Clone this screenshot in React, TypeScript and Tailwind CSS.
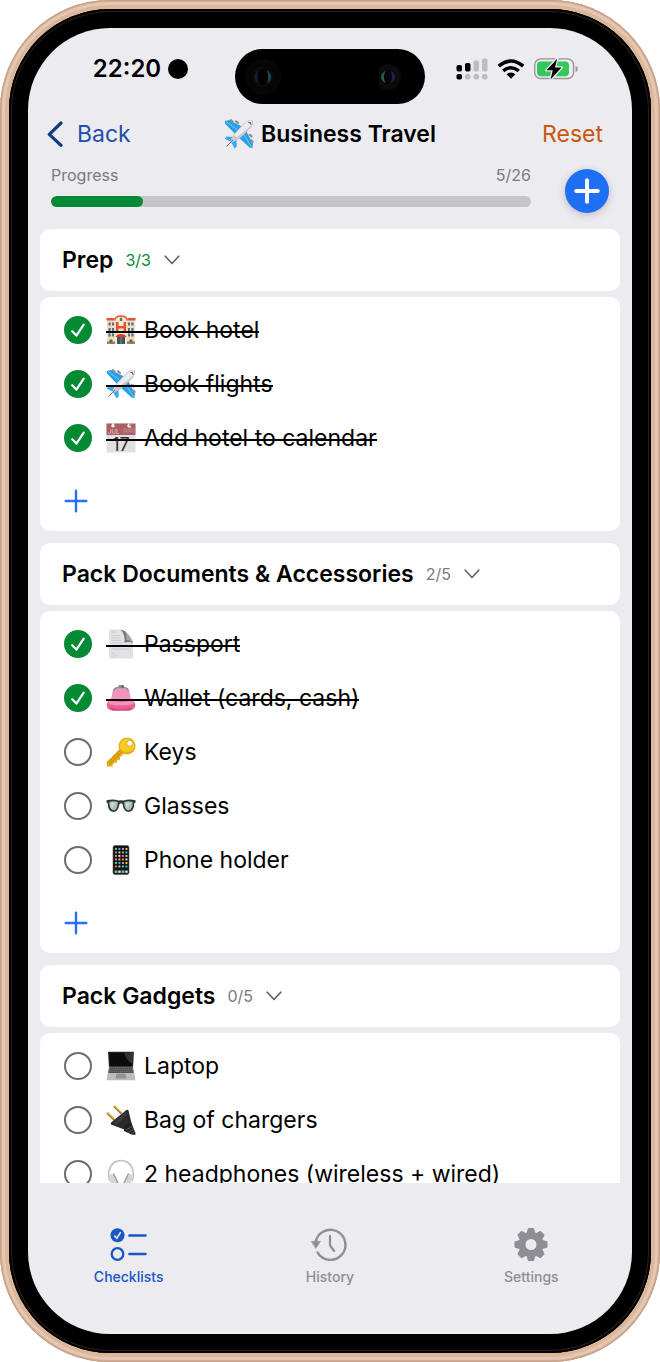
import { useState, type ReactNode } from "react"

type EmojiName =
  | "hotel"
  | "plane"
  | "calendar"
  | "page"
  | "purse"
  | "key"
  | "glasses"
  | "phone"
  | "laptop"
  | "plug"
  | "headphones"

interface Item {
  id: string
  emoji: EmojiName
  label: string
  done?: boolean
}

interface Section {
  title: string
  count: string
  complete?: boolean
  items: Item[]
}

const sections: Section[] = [
  {
    title: "Prep",
    count: "3/3",
    complete: true,
    items: [
      { id: "hotel", emoji: "hotel", label: "Book hotel", done: true },
      { id: "flights", emoji: "plane", label: "Book flights", done: true },
      { id: "calendar", emoji: "calendar", label: "Add hotel to calendar", done: true },
    ],
  },
  {
    title: "Pack Documents & Accessories",
    count: "2/5",
    items: [
      { id: "passport", emoji: "page", label: "Passport", done: true },
      { id: "wallet", emoji: "purse", label: "Wallet (cards, cash)", done: true },
      { id: "keys", emoji: "key", label: "Keys" },
      { id: "glasses", emoji: "glasses", label: "Glasses" },
      { id: "phone-holder", emoji: "phone", label: "Phone holder" },
    ],
  },
  {
    title: "Pack Gadgets",
    count: "0/5",
    items: [
      { id: "laptop", emoji: "laptop", label: "Laptop" },
      { id: "chargers", emoji: "plug", label: "Bag of chargers" },
      { id: "headphones", emoji: "headphones", label: "2 headphones (wireless + wired)" },
    ],
  },
]

const phoneDots = ["#4ade80", "#f4f4f5", "#e879f9", "#d4d4d8", "#fb923c", "#38bdf8", "#f87171", "#facc15"]

const emojiArt: Record<EmojiName, ReactNode> = {
  hotel: (
    <>
      <rect x="1" y="3.5" width="28" height="25" fill="#f3dcc0" />
      <path d="M9 28V5Q9 1 15 1Q21 1 21 5V28Z" fill="#fbe9d3" />
      <path d="M0.5 3H8.5V5.5H0.5ZM21.5 3H29.5V5.5H21.5Z" fill="#e2552c" />
      <path d="M9 5.5Q9 1 15 1Q21 1 21 5.5" fill="none" stroke="#e2552c" strokeWidth="1.3" />
      <path d="M11.2 7V18M18.8 7V18M11.2 12.2H18.8" stroke="#e4532b" strokeWidth="2.6" />
      <path
        d="M2.5 7.5H4.7V10.5H2.5ZM6 7.5H8V10.5H6ZM2.5 13H4.7V16H2.5ZM6 13H8V16H6ZM2.5 18.5H4.7V21.5H2.5ZM6 18.5H8V21.5H6ZM22 7.5H24V10.5H22ZM25.3 7.5H27.5V10.5H25.3ZM22 13H24V16H22ZM25.3 13H27.5V16H25.3ZM22 18.5H24V21.5H22ZM25.3 18.5H27.5V21.5H25.3ZM13.8 2.7H16.2V6H13.8Z"
        fill="#4c7185"
      />
      <rect x="11" y="22" width="8" height="7" fill="#38596a" />
      <path d="M15 22V29" stroke="#b9876a" strokeWidth="0.8" />
      <path d="M9.5 22Q10.5 19 15 19Q19.5 19 20.5 22Z" fill="#db3a24" />
      <path d="M1 29V26.5H9V29ZM21 29V26.5H29V29Z" fill="#a77b5e" />
      <circle cx="5" cy="26" r="1.7" fill="#46783a" />
      <circle cx="25" cy="26" r="1.7" fill="#46783a" />
    </>
  ),
  plane: (
    <>
      <path d="M20 8.5L5 1L0.8 2L1.2 4.8L12 16Z" fill="#2b9fe4" />
      <path d="M21.5 10.5L29 25L28.4 29.3L25.6 28.4L14 18Z" fill="#2b9fe4" />
      <path d="M10 18L2.5 17.4L0.6 19.6L8 23.4Z" fill="#3aaaf0" />
      <path d="M12.5 20.5L12.8 27.4L10.6 29.6L6.8 22.8Z" fill="#3aaaf0" />
      <path d="M1.8 2.3L13 10.5M28 28.5L20 16" stroke="#8bd2f6" strokeWidth="0.8" />
      <path d="M6.8 1.2L8.6 2.6M12 2.3L14 4M28.6 22.8L27.4 21.4M27.6 17.5L26 15.8" stroke="#8f8f94" strokeWidth="2.2" strokeLinecap="round" />
      <path d="M28.9 1.1C25.8 0.4 22.8 1.4 20.5 3.7L9.7 15.2L5.2 24.8L14.8 20.3L26.3 9.5C28.6 7.2 29.6 4.2 28.9 1.1Z" fill="#c9c9cd" />
      <path d="M28 1.6C25.4 1.3 23.3 2.2 21.5 4L9.8 16.6L13.2 18L26.6 7Z" fill="#ededf0" />
      <path d="M24.3 3.2Q26.8 3.1 26.8 5.6" fill="none" stroke="#55585f" strokeWidth="1.1" />
      <path d="M9 21L2.5 27.5" stroke="#72747b" strokeWidth="1" />
    </>
  ),
  calendar: (
    <>
      <rect x="0.5" y="0.5" width="29" height="29" fill="#e0e0e1" />
      <rect x="0.5" y="0.5" width="29" height="11.5" fill="#ad6064" />
      <path d="M17 5.2H29V9.5H17Z" fill="#b6757a" />
      <circle cx="7" cy="2.8" r="1.7" fill="#fff" />
      <circle cx="23" cy="2.8" r="1.7" fill="#fff" />
      <path d="M7 0V3M23 0V3L25 4.5" stroke="#f3eaea" strokeWidth="1.3" />
      <text x="2" y="10.5" fontSize="6" fontFamily="Inter, sans-serif" fill="#e8cdcf">JUL</text>
      <text x="15" y="27.5" fontSize="18" textAnchor="middle" fontFamily="Inter, sans-serif" fill="#303032">17</text>
    </>
  ),
  page: (
    <>
      <path d="M3 0.5H15Q19 1.5 19.5 8L20 13Q24 12 27 15V29.5H3Z" fill="#e2e2e4" />
      <path d="M14.5 0.5Q20 1.5 21.5 5.5L27 14.5Q22.5 12 18.5 13.8Q19.5 5 14.5 0.5Z" fill="#747479" />
      <path d="M16 0.5Q21 2 20.5 11Q24.5 11 27 14.5V13Q24 5 16 0.5Z" fill="#a5a5aa" />
      <path d="M5.5 3H11M5.5 6.5H14M5.5 9H14M5.5 11.5H15M5.5 14H16M5.5 17H23M5.5 20H23M5.5 24.5H9M5.5 27H12" stroke="#cacacf" strokeWidth="0.9" />
    </>
  ),
  purse: (
    <>
      <path d="M7.5 11Q7 4.5 12.5 4.5H17.5Q23 4.5 22.5 11" fill="#d9a6b9" stroke="#8f8f93" strokeWidth="1.7" />
      <circle cx="13.8" cy="3.3" r="1.6" fill="#929296" />
      <circle cx="16.4" cy="3.3" r="1.6" fill="#68686c" />
      <path d="M7 8Q15 5.5 23 8L25.5 18H4.5Z" fill="#f294bd" />
      <path d="M5.5 16Q15 18 24.5 16Q29.5 18.5 29.3 22.5Q28.5 27.5 22 27.5H8Q1.5 27.5 0.7 22.5Q0.5 18.5 5.5 16Z" fill="#e85f99" />
      <path d="M4.5 17.5Q15 20 25.5 17.5Q27.8 19 27.8 21Q15 24 2.2 21Q2.2 19 4.5 17.5Z" fill="#f590ba" />
      <path d="M3 24.5Q15 28 27 24.5L24 27.5H6Z" fill="#d54683" />
    </>
  ),
  key: (
    <>
      <path
        d="M13.2 12.5C11.3 6.1 15.4 0.6 21 0.6C26 0.6 29.5 4.4 29.5 9C29.5 14.8 24.1 18.7 17.4 16.9L14 20.2L14 22.7L11.3 22.9L11 25.6L8.5 25.7L6.5 27.5V29.5H0.8V25Z"
        fill="#e4ad12"
      />
      <path d="M14.2 12C12.7 6.8 16 2 21 1.8C25.3 1.7 28.3 4.8 28.3 8.6C28.2 13.4 23 16.2 17.2 14.6Z" fill="#f5cb25" />
      <path d="M1.8 26L14 13.5M2.8 28L15.5 15.3" stroke="#b57f08" strokeWidth="0.8" />
      <circle cx="23.7" cy="6.3" r="2.9" fill="#fff" stroke="#d59b10" strokeWidth="0.7" />
    </>
  ),
  glasses: (
    <>
      <path d="M0.5 9.3Q7 7.8 12.5 9.5Q15 8.9 17.5 9.5Q23 7.8 29.5 9.3V11.5L28.3 12.3Q28.3 20.5 22.5 21Q17.7 21 16.5 13Q15 11.5 13.5 13Q12.3 21 7.5 21Q1.7 20.5 1.7 12.3L0.5 11.5Z" fill="#323638" />
      <path d="M3.3 11Q7.5 9.7 11.8 11.1Q11.8 19 7.8 19.5Q3.3 19 3.3 11ZM18.2 11.1Q22.5 9.7 26.7 11Q26.7 19 22.2 19.5Q18.2 19 18.2 11.1Z" fill="#a3c1b7" />
      <path d="M4.5 12Q7.5 11 9.8 12L6 18Q4.4 15.5 4.5 12ZM19.4 12Q22 11 24.5 12L20.8 18Q19.5 15.5 19.4 12Z" fill="#c4d8cf" />
    </>
  ),
  phone: (
    <>
      <rect x="7" y="0.5" width="16" height="29" rx="2" fill="#151516" stroke="#525256" strokeWidth="0.6" />
      {Array.from({ length: 24 }, (_, i) => (
        <rect
          key={i}
          x={9 + (i % 4) * 3.5}
          y={3 + Math.floor(i / 4) * 3.5}
          width="1.9"
          height="1.9"
          fill={phoneDots[(i * 5 + Math.floor(i / 4) * 2) % 8]}
        />
      ))}
      <rect x="8.2" y="25.2" width="13.6" height="3" fill="#505153" />
      <path d="M9 26.7H11M16 26.7H18" stroke="#4ade80" strokeWidth="2" />
      <path d="M12.5 26.7H14.5M19.5 26.7H21.5" stroke="#dbeafe" strokeWidth="2" />
    </>
  ),
  laptop: (
    <>
      <path d="M2 0.8H28L27 17H3Z" fill="#39393b" />
      <path d="M2.8 1.4H27.2L26.3 15H3.7Z" fill="#0b0b0c" />
      <path d="M18 1.4H27.2L26.3 13Q20 9 18 1.4Z" fill="#323235" />
      <path d="M3 16H27L28.3 22.5H1.7Z" fill="#77777a" />
      <path d="M4 17.2H26M3.5 19.2H26.5M3.2 21.2H26.8" stroke="#3b3b3e" strokeWidth="1.2" strokeDasharray="1.5 0.4" />
      <path d="M1.7 22.5H28.3L29.5 29.3H0.5Z" fill="#bcbcbe" />
      <path d="M10.5 22.8H19.5L20.5 27.5H9.5Z" fill="#929295" />
    </>
  ),
  plug: (
    <>
      <path d="M1.2 8L9 15.5M8 1.2L15.5 8.5" stroke="#97701f" strokeWidth="2.3" />
      <path d="M1.6 7.5L9 14.6M8.5 0.8L15.5 7.6" stroke="#e8bd55" strokeWidth="1.2" />
      <path d="M21 4.5L22.5 5.5L25.8 19.5L19.5 25L5 19.5L4.8 17.8Z" fill="#292a2b" />
      <path d="M20 7L8 18L11 19.2L21.8 9Z" fill="#3b3c3e" />
      <path d="M18.5 21L25 17L29.5 28V29.8H26L18 26Z" fill="#202122" />
      <path d="M20 25L27 21M22.5 27.2L28 24M25 29L29 26.5" stroke="#67696b" strokeWidth="0.8" />
    </>
  ),
  headphones: (
    <>
      <path d="M4 22C0.5 10 6 1.7 15 1.7S29.5 10 26 22" fill="none" stroke="#bebec2" strokeWidth="2" />
      <path d="M4.2 20C1.5 10 7 2.3 15 2.3S28.5 10 25.8 20" fill="none" stroke="#ececef" strokeWidth="0.8" />
      <path d="M3 16L7.5 14.5L12 24L9 29H6Z" fill="#d5d6d9" />
      <path d="M27 16L22.5 14.5L18 24L21 29H24Z" fill="#d5d6d9" />
      <path d="M7.5 14.5L12 24L10.5 28M22.5 14.5L18 24L19.5 28" fill="none" stroke="#9c9da3" strokeWidth="1.4" />
    </>
  ),
}

function Emoji({ name }: { name: EmojiName }) {
  return (
    <svg viewBox="0 0 30 30" className="size-[30px] shrink-0" aria-hidden="true">
      {emojiArt[name]}
    </svg>
  )
}

function StatusBar() {
  return (
    <div className="grid grid-cols-[1fr_190px_1fr] pt-[21px]">
      <div className="flex h-10 items-center justify-center gap-[7px] pl-[18px]">
        <span className="text-2xl font-semibold">22:20</span>
        <span className="size-5 rounded-full bg-black" />
      </div>
      <div className="flex h-[55px] items-center justify-between rounded-full bg-black px-[10px]">
        <svg viewBox="0 0 36 36" className="size-9" aria-hidden="true">
          <circle cx="18" cy="18" r="18" fill="#060606" />
          <circle cx="18" cy="18" r="10.5" fill="#0a0a0c" />
          <path d="M13.5 11Q5.5 18 13.5 25Q11.5 18 13.5 11Z" fill="#171b3d" />
          <path d="M22 11Q30.5 18 22 25Q24 18 22 11Z" fill="#1d4440" />
          <ellipse cx="18" cy="18" rx="5" ry="8" fill="#020202" />
        </svg>
        <svg viewBox="0 0 36 36" className="size-9" aria-hidden="true">
          <circle cx="8" cy="18" r="13" fill="none" />
          <circle cx="9" cy="18" r="13" fill="#0b0b0d" />
          <path d="M6 12Q-2 18 6 24Z" fill="#2b5a55" />
          <path d="M12 12Q20 18 12 24Z" fill="#1d2452" />
          <ellipse cx="9" cy="18" rx="4" ry="7" fill="#050507" />
        </svg>
      </div>
      <div className="flex h-10 items-center gap-[9px] pl-[31px]">
        <svg viewBox="0 0 32 22" className="h-[22px] w-8 shrink-0" aria-hidden="true">
          <rect x="0.5" y="7" width="5.5" height="6.5" rx="1.8" />
          <rect x="9" y="5" width="5.5" height="8.5" rx="1.8" />
          <rect x="17.5" y="2.5" width="5.5" height="11" rx="1.8" fill="#bdbdc1" />
          <rect x="26" y="0.5" width="5.5" height="13" rx="1.8" fill="#bdbdc1" />
          <rect x="0.5" y="16" width="5.5" height="5.5" rx="1.8" />
          <rect x="9" y="16" width="5.5" height="5.5" rx="2" fill="#bdbdc1" />
          <rect x="17.5" y="16" width="5.5" height="5.5" rx="2" fill="#bdbdc1" />
          <rect x="26" y="16" width="5.5" height="5.5" rx="2" fill="#bdbdc1" />
        </svg>
        <svg viewBox="0 0 28 20" className="h-5 w-7 shrink-0" aria-hidden="true">
          <path d="M1.8 7.2Q14 -3.2 26.2 7.2" fill="none" stroke="#000" strokeWidth="3.6" />
          <path d="M6.2 11.9Q14 5.4 21.8 11.9" fill="none" stroke="#000" strokeWidth="3.4" />
          <path d="M14 19.8L9.6 15.3Q14 11.7 18.4 15.3Z" />
        </svg>
        <svg viewBox="0 0 44 22" className="h-[22px] w-11 shrink-0" aria-hidden="true">
          <rect x="0.7" y="0.9" width="38.9" height="19.6" rx="6" fill="none" stroke="#96969a" strokeWidth="1.4" />
          <path d="M41.6 8Q43.8 8.6 43.8 11T41.6 14.2Z" fill="#96969a" />
          <rect x="3" y="3.4" width="32" height="14.8" rx="4" fill="#34c759" />
          <path d="M23.2 0.8L12.5 12.3H18.8L16.5 21.5L27.5 9.5H21Z" stroke="#ebebf0" strokeWidth="2.6" strokeLinejoin="round" paintOrder="stroke" />
        </svg>
      </div>
    </div>
  )
}

function NavBar() {
  return (
    <header className="grid h-[60px] grid-cols-[1fr_auto_1fr] items-center px-[19px]">
      <a href="#lists" className="flex items-center gap-[14px] text-[23px] text-[#1f4fa8]">
        <svg viewBox="0 0 16 26" className="h-[26px] w-4" fill="none" stroke="#123b82" strokeWidth="3.2" strokeLinecap="round" strokeLinejoin="round" aria-hidden="true">
          <path d="M14 2L2.3 13.4L14 24.4" />
        </svg>
        Back
      </a>
      <h1 className="flex items-center gap-[7px] text-[23px] font-semibold">
        <Emoji name="plane" />
        Business Travel
      </h1>
      <button type="button" className="justify-self-end px-[10px] text-[23px] text-[#c9570f]">
        Reset
      </button>
    </header>
  )
}

function ProgressRow() {
  const done = 5
  const total = 26
  return (
    <div className="flex items-start gap-[34px] px-[23px] pt-[5px] pb-4">
      <div className="flex-1">
        <div className="flex h-[27px] justify-between text-base leading-3 text-[#7a7a7f]">
          <span>Progress</span>
          <span>
            {done}/{total}
          </span>
        </div>
        <div className="h-[11px] overflow-hidden rounded-full bg-[#c5c5ca]">
          <div className="h-full rounded-full bg-[#048a34]" style={{ width: `${(done / total) * 100}%` }} />
        </div>
      </div>
      <button
        type="button"
        aria-label="Add item"
        className="flex size-11 items-center justify-center rounded-full bg-[#1f6ff5] shadow-[0_2px_8px_rgba(0,0,0,0.2)]"
      >
        <svg viewBox="0 0 26 26" className="size-[26px]" stroke="#fff" strokeWidth="4" strokeLinecap="round" aria-hidden="true">
          <path d="M13 2.3V23.7M2.3 13H23.7" />
        </svg>
      </button>
    </div>
  )
}

function ChecklistRow({ item }: { item: Item }) {
  const [checked, setChecked] = useState(Boolean(item.done))
  return (
    <li className="flex h-[54px] items-center gap-[14px]">
      <span className="relative flex">
        <input
          type="checkbox"
          id={item.id}
          checked={checked}
          onChange={() => setChecked(!checked)}
          className="size-7 appearance-none rounded-full border-2 border-[#6c6c71] checked:border-[#048a34] checked:bg-[#048a34]"
        />
        {checked && (
          <svg viewBox="0 0 28 28" className="pointer-events-none absolute inset-0 size-7" fill="none" stroke="#fff" strokeWidth="2.2" strokeLinecap="round" strokeLinejoin="round" aria-hidden="true">
            <path d="M8.2 15.2L12.4 19.6L19.7 8.7" />
          </svg>
        )}
      </span>
      <label htmlFor={item.id} className="relative flex items-center gap-2 text-[23px] leading-8">
        <Emoji name={item.emoji} />
        {item.label}
        {checked && <span className="absolute inset-x-0 top-[17px] h-[2px] bg-black" />}
      </label>
    </li>
  )
}

function ChecklistSection({ section }: { section: Section }) {
  return (
    <section className="flex flex-col gap-[6px]">
      <div className="flex h-[62px] items-center gap-3 rounded-[10px] bg-white px-[22px]">
        <h2 className="text-[23px] font-semibold">{section.title}</h2>
        <span className={section.complete ? "text-base text-[#048a34]" : "text-base text-[#7a7a7f]"}>{section.count}</span>
        <button type="button" aria-label={`Collapse ${section.title}`}>
          <svg viewBox="0 0 18 12" className="h-3 w-[18px]" fill="none" stroke="#5f5f64" strokeWidth="1.6" strokeLinecap="round" strokeLinejoin="round" aria-hidden="true">
            <path d="M2.2 2.2L9 9.5L15.8 2.2" />
          </svg>
        </button>
      </div>
      <div className="rounded-[10px] bg-white px-6 pt-[6px]">
        <ul>
          {section.items.map((item) => (
            <ChecklistRow key={item.id} item={item} />
          ))}
        </ul>
        <button type="button" aria-label={`Add to ${section.title}`} className="flex h-[66px] items-center pt-[6px]">
          <svg viewBox="0 0 24 24" className="size-6" stroke="#2470f5" strokeWidth="2.4" strokeLinecap="round" aria-hidden="true">
            <path d="M12 1.7V22.3M1.7 12H22.3" />
          </svg>
        </button>
      </div>
    </section>
  )
}

function Tab({ label, active, children }: { label: string; active?: boolean; children: ReactNode }) {
  return (
    <a
      href={`#${label.toLowerCase()}`}
      className={
        active
          ? "flex flex-col items-center gap-[5px] text-sm font-medium text-[#1857c7]"
          : "flex flex-col items-center gap-[5px] text-sm font-medium text-[#8e8e96]"
      }
    >
      <svg viewBox="0 0 38 36" className="h-9 w-[38px]" fill="none" stroke="currentColor" strokeLinecap="round" aria-hidden="true">
        {children}
      </svg>
      {label}
    </a>
  )
}

function TabBar() {
  return (
    <nav className="grid grid-cols-3 pt-[43px] pb-[47px]">
      <Tab label="Checklists" active>
        <circle cx="7.5" cy="9.3" r="7" fill="currentColor" stroke="none" />
        <path d="M4.7 10L6.8 12.3L10.4 6.6" stroke="#ebebf0" strokeWidth="1.6" />
        <circle cx="7.5" cy="28" r="5.8" strokeWidth="2.3" />
        <path d="M19.5 9.5H35.5M19.5 28H35.5" strokeWidth="2.7" />
      </Tab>
      <Tab label="History">
        <path d="M4.6 16.5A15 15 0 1 1 6.6 26.6" strokeWidth="2.4" />
        <path d="M0.5 15.3H9.5L5 22.3Z" fill="currentColor" strokeWidth="0.6" strokeLinejoin="round" />
        <path d="M19 9.8V19.5L23.2 25" strokeWidth="2.2" strokeLinejoin="round" />
      </Tab>
      <Tab label="Settings">
        <circle cx="19" cy="18.5" r="9" strokeWidth="7" />
        {[0, 45, 90, 135, 180, 225, 270, 315].map((deg) => (
          <path
            key={deg}
            d="M15.5 7.5L16.8 3H21.2L22.5 7.5Z"
            transform={`rotate(${deg} 19 18.5)`}
            fill="currentColor"
            strokeWidth="2"
            strokeLinejoin="round"
          />
        ))}
      </Tab>
    </nav>
  )
}

export default function App() {
  return (
    <div className="h-screen bg-white font-[Inter,sans-serif] text-black">
      {/* Gold rim, then the black bezel, then the screen */}
      <div className="h-full rounded-[110px] bg-[#dbb79b] p-[9px] shadow-[inset_0_0_0_1px_#c5a18b,inset_0_0_0_2px_#d3af98,inset_0_0_0_5px_#e5c7b2]">
        <div className="h-full rounded-[101px] bg-black p-[19px] shadow-[inset_0_0_0_2px_#000,inset_0_0_0_3px_#2b221d]">
          <div className="flex h-full flex-col overflow-hidden rounded-[82px] bg-[#ebebf0]">
            <StatusBar />
            <NavBar />
            <ProgressRow />
            <main className="flex min-h-0 flex-1 flex-col gap-3 overflow-y-auto px-3 [scrollbar-width:none]">
              {sections.map((section) => (
                <ChecklistSection key={section.title} section={section} />
              ))}
            </main>
            <TabBar />
          </div>
        </div>
      </div>
    </div>
  )
}
